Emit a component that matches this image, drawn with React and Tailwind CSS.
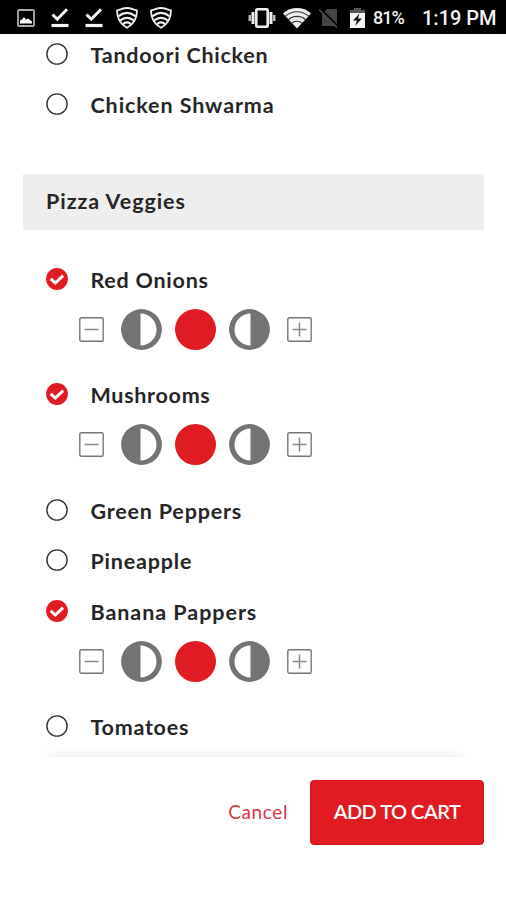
import React from "react";

const veggies = [
  { name: "Red Onions", checked: true, tracking: "tracking-[0.75px]" },
  { name: "Mushrooms", checked: true, tracking: "tracking-[0.7px]" },
  { name: "Green Peppers", checked: false, tracking: "tracking-[0.8px]" },
  { name: "Pineapple", checked: false, tracking: "tracking-[0.8px]" },
  { name: "Banana Pappers", checked: true, tracking: "tracking-[0.95px]" },
  { name: "Tomatoes", checked: false, tracking: "tracking-[0.75px]" },
];

const meats = [
  { name: "Tandoori Chicken", checked: false, tracking: "tracking-[0.75px]" },
  { name: "Chicken Shwarma", checked: false, tracking: "tracking-[0.9px]" },
];

function DownloadDone() {
  return (
    <svg viewBox="0 0 18 20" className="h-5 w-[18px]" fill="none" stroke="#f4f4f4">
      <path d="M1.5 6.5 6.3 11.2 16 1.3" strokeWidth="3" />
      <path d="M.5 17.5h17" strokeWidth="3.2" />
    </svg>
  );
}

function WifiShield() {
  return (
    <svg viewBox="0 0 22 22" className="h-[22px] w-[22px]" fill="none" stroke="#eee" strokeLinecap="round">
      <path d="M1 3.5C4 3 7 1 11 1s7 2 10 2.5c0 6-2 13-10 17.3C3 16.5 1 9.5 1 3.5Z" strokeWidth="1.8" strokeLinejoin="round" />
      <path d="M3 8.8c5-3.6 11-3.6 16 0M5 12.8c3.7-2.5 8.3-2.5 12 0M7.8 16.5c2-1.3 4.4-1.3 6.4 0" strokeWidth="2.2" />
    </svg>
  );
}

function StatusBar() {
  return (
    <header className="flex h-[34px] shrink-0 items-center bg-black pr-[11px] pl-[17px] font-[Roboto,sans-serif] text-[#f2f2f2]">
      <div className="flex items-center pt-px">
        <svg viewBox="0 0 18 18" className="mr-[16px] h-[18px] w-[18px]">
          <rect x="1" y="1" width="16" height="16" rx="1" fill="none" stroke="#aaa" strokeWidth="1.8" />
          <path d="M3 14.5v-3l2-1 2-2.5 2 2.5 2-1 4 3v2Z" fill="#fff" />
        </svg>
        <DownloadDone />
        <span className="w-[16px]" />
        <DownloadDone />
        <span className="w-[13px]" />
        <WifiShield />
        <span className="w-[12px]" />
        <WifiShield />
      </div>
      <div className="ml-auto flex items-center pt-px">
        <svg viewBox="0 0 28 20" className="mr-[7px] h-5 w-7" fill="none" stroke="#eee">
          <rect x="8.3" y="1.3" width="11.4" height="17.4" rx="1" strokeWidth="2.6" />
          <path d="M5 4v12M23 4v12" strokeWidth="3" />
          <path d="M1.8 7v6M26.2 7v6" strokeWidth="2.6" stroke="#bbb" />
        </svg>
        <svg viewBox="0 0 28 22" className="mr-[8px] h-[22px] w-7">
          <path d="M0 6.5C8-.8 20-.8 28 6.5L14 21.5Z" fill="#eee" />
          <path d="M2 9.5c7-6.4 17-6.4 24 0M5 13c5-4.8 13-4.8 18 0M8.5 16.5c3-3 8-3 11 0" fill="none" stroke="#333" strokeWidth="1.1" />
        </svg>
        <svg viewBox="0 0 20 20" className="mr-[11px] h-5 w-5">
          <path d="M8 1h10v17H3V6Z" fill="#444" />
          <path d="m1 1 18 18" stroke="#000" strokeWidth="3" />
          <path d="m0 1.5 18 18" stroke="#555" strokeWidth="1.3" />
        </svg>
        <svg viewBox="0 0 15 20" className="mr-[8px] h-5 w-[15px]">
          <path d="M4 0h7v2h4v4H0V2h4Z" fill="#555" />
          <path d="M0 5h15v15H0Z" fill="#f4f4f4" />
          <path d="m9.5 5.5-6.5 7h4l-2 5.5 7-7.5H8Z" fill="#111" />
        </svg>
        <span className="w-[32px] text-[18px] leading-5 font-medium tracking-[-1px] whitespace-nowrap">81%</span>
        <span className="ml-[17px] w-[73px] text-[20px] leading-5 font-medium whitespace-nowrap">1:19 PM</span>
      </div>
    </header>
  );
}

function Marker({ checked }) {
  return (
    <svg viewBox="0 0 22 22" className="h-[22px] w-[22px] shrink-0" fill="none">
      {checked ? (
        <>
          <circle cx="11" cy="11" r="10.9" fill="#e11b22" />
          <path d="m4.7 10.8 4.6 4.2 7.8-7.4" stroke="#fff" strokeWidth="3" />
        </>
      ) : (
        <circle cx="11" cy="11" r="10.1" stroke="#333" strokeWidth="1.4" />
      )}
    </svg>
  );
}

function StepButton({ plus }) {
  return (
    <svg viewBox="0 0 25 25" className="h-[25px] w-[25px]" fill="none" stroke="#777">
      <rect x="0.8" y="0.8" width="23.4" height="23.4" rx="1.5" strokeWidth="1.4" />
      <path d={plus ? "M5.5 12.5h14M12.5 5.5v14" : "M5.5 12.5h14"} stroke="#888" strokeWidth="1.5" />
    </svg>
  );
}

function HalfCircle({ side }) {
  return (
    <svg viewBox="0 0 41 41" className="h-[41px] w-[41px]">
      <circle cx="20.5" cy="20.5" r="20.4" fill="#737373" />
      <path
        d={side === "left" ? "M19.5 4.5a16 16 0 0 1 0 32Z" : "M21.5 4.5a16 16 0 0 0 0 32Z"}
        fill="#fff"
      />
    </svg>
  );
}

function Portions() {
  return (
    <div className="flex h-[65px] items-center pb-[14.5px] pl-[79px]">
      <StepButton />
      <div className="ml-[17px] flex items-center gap-[13px]">
        <HalfCircle side="left" />
        <span className="h-[41px] w-[41px] rounded-full bg-[#e11b22]" />
        <HalfCircle side="right" />
      </div>
      <span className="w-[17px]" />
      <StepButton plus />
    </div>
  );
}

function Topping({ item }) {
  return (
    <li>
      <div className="flex h-[50.5px] items-center gap-[23px] pl-[45.5px]">
        <Marker checked={item.checked} />
        <span className={`pt-[1.5px] text-[21.5px] leading-6 font-bold whitespace-nowrap ${item.tracking}`}>
          {item.name}
        </span>
      </div>
      {item.checked && <Portions />}
    </li>
  );
}

export default function App() {
  return (
    <div className="flex h-[900px] w-[506px] flex-col overflow-hidden bg-white font-[Lato,sans-serif] text-[#262626]">
      <StatusBar />
      <main className="relative h-[723px] shrink-0 overflow-hidden">
        <ul className="-mt-[5.5px]">
          {meats.map((item) => (
            <Topping key={item.name} item={item} />
          ))}
        </ul>
        <h2 className="mx-[23px] mt-[44.5px] h-[56px] w-[461px] bg-[#eee] pl-[23px] text-[21.5px] leading-[54px] font-bold tracking-[0.95px]">
          Pizza Veggies
        </h2>
        <ul className="mt-[23.5px]">
          {veggies.map((item) => (
            <Topping key={item.name} item={item} />
          ))}
        </ul>
        {/* scroll shadow above the footer */}
        <div className="absolute bottom-0 left-[38px] h-[8px] w-[432px] bg-linear-to-b from-transparent to-[#f1f1f1] mask-x-from-95% mask-x-to-100%" />
      </main>
      <footer className="flex items-center justify-end gap-[22px] pt-[23px] pr-[22px]">
        <button className="text-[19px] tracking-[0.6px] text-[#e0373c]">Cancel</button>
        <button className="h-[65px] w-[174px] rounded-[4px] border border-[#d50f16] bg-[#e11b22] pb-[3px] text-[20px] font-semibold tracking-[-0.5px] whitespace-nowrap text-white">
          ADD TO CART
        </button>
      </footer>
    </div>
  );
}
